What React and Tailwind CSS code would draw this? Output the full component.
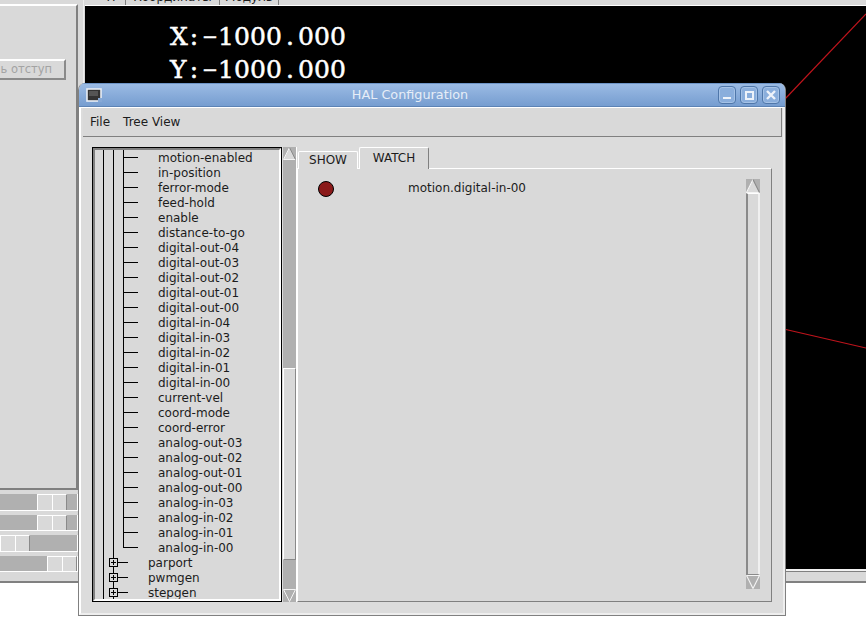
import React from 'react';

const sans = { fontFamily: '"DejaVu Sans", sans-serif' };

const pins = [
  'motion-enabled', 'in-position', 'ferror-mode', 'feed-hold', 'enable', 'distance-to-go',
  'digital-out-04', 'digital-out-03', 'digital-out-02', 'digital-out-01', 'digital-out-00',
  'digital-in-04', 'digital-in-03', 'digital-in-02', 'digital-in-01', 'digital-in-00',
  'current-vel', 'coord-mode', 'coord-error',
  'analog-out-03', 'analog-out-02', 'analog-out-01', 'analog-out-00',
  'analog-in-03', 'analog-in-02', 'analog-in-01', 'analog-in-00',
];

const PinRow = ({ name, last }) => (
  <div className="flex h-[15px] shrink-0 items-center">
    <svg width="63" height="15" className="shrink-0" shapeRendering="crispEdges">
      <path d={`M8.5 0V15M18.5 0V15M28.5 0V${last ? 8 : 15}M28 7.5H43`} stroke="#000" fill="none" />
    </svg>
    <span>{name}</span>
  </div>
);

const GroupRow = ({ name }) => (
  <div className="flex h-[15px] shrink-0 items-center">
    <svg width="53" height="15" className="shrink-0" shapeRendering="crispEdges">
      <path d="M8.5 0V15M18.5 0V3M18.5 12V15M23 7.5H33" stroke="#000" fill="none" />
      <rect x="14.5" y="3.5" width="8" height="8" fill="#d9d9d9" stroke="#000" />
      <path d="M16 7.5H21M18.5 5V10" stroke="#000" fill="none" />
    </svg>
    <span>{name}</span>
  </div>
);

const Arrow = ({ down, size = 13 }) => (
  <svg width={size} height={size} className="block shrink-0" viewBox="0 0 13 13">
    {down ? (
      <>
        <polygon points="1,1 12,1 6.5,12" fill="#b0b0b0" />
        <path d="M0.5 0.5H12.5L6.5 12.5" stroke="#f4f4f4" fill="none" />
        <path d="M0.5 0.5L6.5 12.5" stroke="#f4f4f4" fill="none" />
      </>
    ) : (
      <>
        <polygon points="6.5,1 12,12 1,12" fill="#d9d9d9" />
        <path d="M6.5 0.5L0.5 12.5H12.5" stroke="#f4f4f4" fill="none" />
        <path d="M6.5 0.5L12.5 12.5" stroke="#8a8a8a" fill="none" />
      </>
    )}
  </svg>
);

const ScaleRow = ({ thumbLeft }) => (
  <div className="mt-[4px] flex h-[17px] w-[78px] overflow-hidden border-r border-b border-white bg-[#b0b0b0]">
    <div className="shrink-0" style={{ width: thumbLeft }} />
    <div className="flex h-full shrink-0">
      <div className="h-full w-[15px] border-t border-l border-white bg-[#d9d9d9]" />
      <div className="h-full w-[15px] border-t border-r border-l border-t-white border-r-[#8a8a8a] border-l-white bg-[#d9d9d9]" />
    </div>
  </div>
);

const WinButton = ({ children }) => (
  <div className="flex h-[18px] w-[18px] items-center justify-center rounded-[4px] border border-[#4f77aa] bg-[#8aaedc] shadow-[inset_0_0_0_1px_#a5c2e6]">
    <svg width="14" height="14" viewBox="0 0 14 14" shapeRendering="crispEdges">{children}</svg>
  </div>
);

const DroLine = ({ text }) => (
  <div className="flex items-baseline">
    {text.split('').map((ch, i) => (
      <span key={i} className={`w-[16px] shrink-0 text-center ${ch === '−' ? '-translate-y-[2px] text-[19px]' : ''}`}>{ch}</span>
    ))}
  </div>
);

export default function App() {
  return (
    <div className="relative h-[631px] w-[866px] overflow-hidden bg-white text-[12px] text-[#1c1c1c]" style={sans}>
      {/* main program behind the window */}
      <div className="flex h-[583px] w-full flex-col border-b-2 border-[#808080] bg-[#d9d9d9]">
        <div className="flex min-h-0 flex-1">
          <div className="flex w-[83px] shrink-0 flex-col">
            <div className="mt-[4px] flex h-[486px] w-[78px] shrink-0 flex-col border-t-2 border-r-2 border-b-2 border-t-white border-r-[#808080] border-b-[#808080] pt-[53px]">
              <div className="flex h-[21px] w-[66px] items-center justify-end overflow-hidden border-t-2 border-r-2 border-b-2 border-t-white border-r-[#8a8a8a] border-b-[#8a8a8a] pr-[12px] text-[11.5px] whitespace-nowrap text-[#a3a3a3]">
                ь отступ
              </div>
            </div>
            <ScaleRow thumbLeft={37} />
            <ScaleRow thumbLeft={37} />
            <ScaleRow thumbLeft={-5} />
            <ScaleRow thumbLeft={47} />
          </div>
          <div className="flex min-w-0 flex-1 flex-col border-l border-[#eeeeee] pl-px">
            <div className="flex h-[6px] shrink-0 overflow-hidden border-b border-white text-[12px] leading-[12px]">
              <div className="flex h-[5px] w-[41px] items-end justify-center border-r border-[#808080] pb-[2px] pl-[12px]">П</div>
              <div className="flex h-[5px] w-[94px] items-end justify-center border-r border-[#808080] pb-[2px]">Координаты</div>
              <div className="flex h-[5px] w-[59px] items-end justify-center border-r border-[#808080] pb-[2px]">Модуль</div>
            </div>
            <div className="relative min-h-0 flex-1 bg-black pt-[15px] pl-[85px] text-[25px] leading-[32px] font-normal text-white [-webkit-text-stroke:0.5px_white]" style={{ fontFamily: '"DejaVu Serif", serif' }}>
              <DroLine text="X:−1000.000" />
              <DroLine text="Y:−1000.000" />
              <svg className="absolute top-0 left-0" width="781" height="563">
                <path d="M680 114L781 8" stroke="#c0141c" strokeWidth="1.2" fill="none" />
                <path d="M690 321L781 342" stroke="#c0141c" strokeWidth="1.2" fill="none" />
              </svg>
            </div>
            <div className="h-[2px] shrink-0 bg-[#f2f2f2]" />
            <div className="h-px shrink-0 bg-[#808080]" />
          </div>
        </div>
        <div className="h-[9px] shrink-0" />
      </div>

      {/* HAL Configuration window */}
      <div className="absolute top-[83px] left-[78px] flex h-[533px] w-[708px] flex-col overflow-hidden rounded-t-[7px] border border-t-0 border-[#808080] bg-[#dcdcdc]">
        <div className="flex h-[24px] shrink-0 items-center border-t border-b border-t-[#6d94c6] border-b-[#5c83b5] bg-gradient-to-b from-[#9bbbe4] to-[#769dd0] pr-[5px] pl-[7px]">
          <svg width="16" height="15" className="shrink-0" viewBox="0 0 16 15">
            <rect x="1" y="1" width="14" height="12" fill="#333" stroke="#e9eef5" strokeWidth="1.6" />
            <rect x="3" y="3" width="9" height="5" fill="#555" />
            <rect x="12" y="10" width="4" height="4" fill="#87a9d6" />
          </svg>
          <div className="min-w-0 flex-1 text-center text-[12.8px] text-[#e6edf7]">HAL Configuration</div>
          <div className="flex gap-[4px]">
            <WinButton><rect x="3" y="9" width="8" height="2" fill="#eef3fa" /></WinButton>
            <WinButton><rect x="3.5" y="3.5" width="7" height="7" fill="none" stroke="#eef3fa" strokeWidth="2" /></WinButton>
            <WinButton><path d="M3 3L11 11M11 3L3 11" stroke="#eef3fa" strokeWidth="2.4" fill="none" shapeRendering="auto" /></WinButton>
          </div>
        </div>

        <div className="flex min-h-0 flex-1 flex-col border-t border-r-2 border-b-2 border-l-2 border-t-white border-r-[#eeeeee] border-b-[#eeeeee] border-l-white pr-px pl-[2px]">
          <div className="flex h-[29px] shrink-0 items-center gap-[13px] border-r border-b border-[#808080] bg-[#d9d9d9] pl-[7px]">
            <span>File</span>
            <span>Tree View</span>
          </div>

          <div className="flex min-h-0 flex-1 pt-[10px] pl-[9px]">
            {/* tree */}
            <div className="h-[455px] w-[190px] shrink-0 border border-black">
              <div className="flex h-full flex-col overflow-hidden border-2 border-t-[#808080] border-r-white border-b-white border-l-[#808080] bg-[#d9d9d9]">
                {pins.map((name, i) => (
                  <PinRow key={name} name={name} last={i === pins.length - 1} />
                ))}
                <GroupRow name="parport" />
                <GroupRow name="pwmgen" />
                <GroupRow name="stepgen" />
              </div>
            </div>
            <div className="ml-px flex h-[455px] w-[14px] shrink-0 flex-col border-r border-white bg-[#b0b0b0]">
              <Arrow />
              <div className="h-[208px] shrink-0" />
              <div className="h-[192px] shrink-0 border border-t-white border-r-[#8a8a8a] border-b-[#8a8a8a] border-l-white bg-[#d9d9d9]" />
              <div className="flex-1" />
              <Arrow down />
            </div>

            {/* notebook */}
            <div className="flex h-[455px] w-[475px] shrink-0 flex-col">
              <div className="relative z-10 flex h-[21px] shrink-0 items-end pl-px">
                <div className="flex h-[18px] w-[60px] translate-y-px items-center justify-center rounded-t-[2px] border-t border-r border-l border-white bg-[#d9d9d9] pb-[2px]">SHOW</div>
                <div className="ml-px flex h-[22px] w-[70px] translate-y-px items-center justify-center rounded-t-[2px] border-t border-r border-l border-t-white border-r-[#808080] border-l-white bg-[#d9d9d9] pb-[2px]">WATCH</div>
              </div>
              <div className="flex min-h-0 flex-1 border border-t-white border-r-[#808080] border-b-[#808080] border-l-white bg-[#d9d9d9]">
                <div className="flex min-w-0 flex-1 items-start pt-[12px] pl-[20px]">
                  <div className="h-[16px] w-[16px] shrink-0 rounded-full border border-black bg-[#8b1a1a]" />
                  <span className="ml-[74px] leading-[15px]">motion.digital-in-00</span>
                </div>
                <div className="mt-[10px] mr-[11px] mb-[12px] flex w-[14px] shrink-0 flex-col">
                  <div className="bg-[#b0b0b0]"><Arrow size={14} /></div>
                  <div className="min-h-0 flex-1 border-t border-r-2 border-b border-l-2 border-t-white border-r-[#f0f0f0] border-b-[#8a8a8a] border-l-[#8a8a8a] bg-[#d9d9d9]" />
                  <div className="bg-[#b0b0b0]"><Arrow down size={14} /></div>
                </div>
              </div>
            </div>
          </div>
        </div>
      </div>
    </div>
  );
}
